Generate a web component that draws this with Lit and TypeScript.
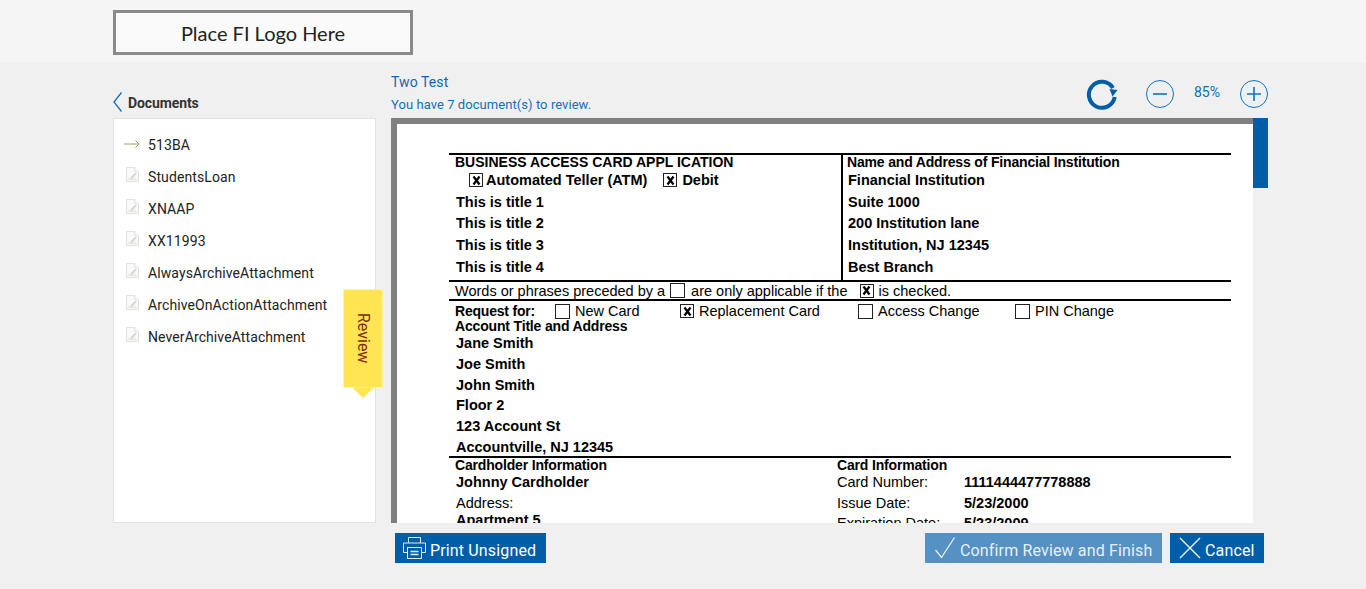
import { LitElement, html, css, svg } from "lit";
import { customElement } from "lit/decorators.js";

const docs = ["StudentsLoan", "XNAAP", "XX11993", "AlwaysArchiveAttachment", "ArchiveOnActionAttachment", "NeverArchiveAttachment"];
const titles = ["This is title 1", "This is title 2", "This is title 3", "This is title 4"];
const inst = ["Suite 1000", "200 Institution lane", "Institution, NJ 12345", "Best Branch"];
const addr = ["Jane Smith", "Joe Smith", "John Smith", "Floor 2", "123 Account St", "Accountville, NJ 12345"];

const fileIcon = svg`<svg class="file" width="13" height="15" viewBox="0 0 14 16" fill="none"><path d="M.5.500h9l4 4v11H.5z" fill="#fafafa" stroke="#dedede"/><path d="M9.500.500v4h4" stroke="#dedede" fill="#fff"/><path d="M2.500 13h9" stroke="#d6d6d6"/><path d="M5 11.500l5.500-5.500 1 1-5.500 5.500z" fill="#cdd8b6" stroke="#cacaca" stroke-width=".5"/></svg>`;
const box = (checked: boolean, cls = "") => html`<span class="box ${checked ? "on" : ""} ${cls}">${checked ? svg`<svg width="11" height="11" viewBox="0 0 11 11"><path d="M2.500 1.500l6 8M8.500 1.500l-6 8" stroke="#000" stroke-width="2.200"/></svg>` : ""}</span>`;

@customElement("app-root")
export class AppRoot extends LitElement {
  static styles = css`
    :host { display: block; width: 1366px; height: 589px; overflow: hidden; background: #f0f0f0; font-family: Roboto, sans-serif; }
    .top { height: 62px; box-sizing: border-box; padding: 10px 0 0 113px; background: #f5f5f5; }
    .logo { width: 300px; height: 45px; box-sizing: border-box; border: 3px solid #8a8a8a; background: #fafafa; display: flex; align-items: center; justify-content: center; font: 20px/1 Lato, sans-serif; color: #222; }
    .main { display: flex; padding-left: 113px; gap: 15px; }
    .side { width: 263px; position: relative; }
    .side-head { height: 56px; box-sizing: border-box; padding-top: 24px; display: flex; align-items: center; gap: 6px; font-size: 14px; font-weight: 700; color: #333; }
    .side-head span { position: relative; top: 1px; letter-spacing: -.1px; }
    .list { height: 405px; box-sizing: border-box; background: #fff; border: 1px solid #e2e2e2; padding: 10px 0 0 10px; }
    .item { height: 32px; display: flex; align-items: center; font-size: 14px; letter-spacing: .1px; color: #222; }
    .ic { width: 24px; display: flex; }
    .arrow { margin-top: -3px; }
    .file { margin-left: 1.500px; margin-top: -5px; }
    .tab { position: absolute; left: 230px; top: 227px; width: 40px; height: 99px; box-sizing: border-box; background: #ffe552; border: 1px solid #fff3a8; color: #822a12; font-size: 16px; writing-mode: vertical-rl; display: flex; align-items: center; justify-content: center; }
    .tab::after { content: ""; position: absolute; left: 9px; bottom: -11px; border: 10px solid transparent; border-bottom: 0; border-top: 10px solid #ffe552; }
    .view { width: 877px; }
    .view-head { height: 56px; position: relative; display: flex; justify-content: space-between; }
    .info { color: #1d62ab; }
    .name { font-size: 14px; line-height: 16px; margin-top: 12px; letter-spacing: .1px; }
    .count { font-size: 13px; line-height: 16px; margin-top: 7px; color: #0f70b7; letter-spacing: .06px; }
    .tools { display: flex; align-items: center; padding-top: 8px; height: 48px; color: #0f6cb0; font-size: 14px; }
    .refresh { margin-right: 28px; }
    .pct { width: 66px; text-align: center; position: relative; top: -2px; }
    .pane { height: 405px; display: flex; }
    .sheet { flex: 1; overflow: hidden; background: #fff; border-top: 6px solid #808080; border-left: 6px solid #808080; padding: 29px 22px 0 52px; font: 14.5px Arial, "Liberation Sans", sans-serif; color: #000; }
    .bar { width: 15px; }
    .thumb { height: 70px; background: #005ea8; }
    .b { font-weight: 700; }
    .ln { white-space: nowrap; display: flex; align-items: center; }
    .sec { display: grid; grid-template-columns: 392px 1fr; border-top: 2px solid #000; height: 125px; }
    .sec > div + div { border-left: 2px solid #000; padding-left: 4px; }
    .h { height: 14px; padding-left: 6px; line-height: 14px; font-size: 14px; letter-spacing: -.17px; }
    .title { letter-spacing: 0; }
    .auto { height: 22px; padding-left: 20px; }
    .auto .box { margin-right: 3px; }
    .auto .box.d { margin-left: 16px; margin-right: 5px; }
    .t { height: 21.67px; padding-left: 7px; }
    .rt.h { padding-left: 0; }
    .rt.auto, .rt.t { padding-left: 1px; }
    .rule { border-top: 2px solid #000; height: 17px; padding-left: 6px; }
    .rule .box { margin: 0 6px 0 5px; }
    .rule .box.c { margin: 0 5px 0 12px; }
    .req { display: grid; grid-template-columns: 100px 125px 178px 157px 1fr; height: 20px; border-top: 2px solid #000; padding-left: 6px; align-items: center; }
    .req .ln { gap: 5px; }
    .req .b { font-size: 14px; letter-spacing: -.2px; }
    .acct { height: 10px; padding-left: 6px; font-size: 14px; letter-spacing: -.17px; }
    .ad { height: 20.7px; padding-left: 7px; }
    .adlist { padding-top: 2px; height: 122px; }
    .card { display: grid; grid-template-columns: 388px 127px 1fr; border-top: 2px solid #000; margin-top: 1px; }
    .card .i { padding-left: 7px; }
    .card .x { padding-left: 0; }
    .c-row { height: 20.5px; }
    .c-row.short { height: 14px; }
    .box { width: 13px; height: 13px; border: 1px solid #222; display: inline-flex; align-items: center; justify-content: center; flex: none; }
    .box.on { border: 1.500px solid #222; width: 12px; height: 12px; }
    .foot { display: flex; justify-content: space-between; padding: 10px 4px 0; }
    .foot > div { display: flex; gap: 8px; }
    .btn { height: 30px; display: flex; align-items: center; background: #005ea8; color: #fff; font-size: 16px; letter-spacing: .15px; padding: 0 0 0 8px; gap: 4px; box-sizing: border-box; white-space: nowrap; }
    .btn svg { flex: none; }
    .btn span { position: relative; top: 2px; }
    .btn.print { width: 151px; }
    .btn.ok { width: 237px; background: #5591c3; color: #e8f0f7; padding-left: 10px; }
    .btn.no { width: 94px; padding-left: 9px; }
  `;

  render() {
    return html`
      <div class="top"><div class="logo">Place FI Logo Here</div></div>
      <div class="main">
        <div class="side">
          <div class="side-head">
            <svg width="9" height="20" viewBox="0 0 9 20" fill="none"><path d="M8.500 .5L1 10l7.500 9.500" stroke="#1272bd" stroke-width="1.300"/></svg>
            <span>Documents</span>
          </div>
          <div class="list">
            <div class="item"><span class="ic"><svg class="arrow" width="16" height="10" viewBox="0 0 16 10" fill="none"><path d="M0 5h15M11.500 1.500L15 5l-3.500 3.500" stroke="#8fa85f"/></svg></span>513BA</div>
            ${docs.map((d) => html`<div class="item"><span class="ic">${fileIcon}</span>${d}</div>`)}
          </div>
          <div class="tab">Review</div>
        </div>
        <div class="view">
          <div class="view-head">
            <div class="info">
              <div class="name">Two Test</div>
              <div class="count">You have 7 document(s) to review.</div>
            </div>
            <div class="tools">
              <svg class="refresh" width="32" height="32" viewBox="0 0 32 32" fill="none"><path d="M27 10A13 13 0 1 0 28.700 19" stroke="#005ea8" stroke-width="4"/><path d="M23.500 11L31.500 12 26.500 18.500z" fill="#005ea8"/></svg>
              <svg width="28" height="28" viewBox="0 0 28 28" fill="none"><circle cx="14" cy="14" r="13.500" stroke="#1272bd"/><path d="M7 14h14" stroke="#1272bd" stroke-width="1.600"/></svg>
              <span class="pct">85%</span>
              <svg width="28" height="28" viewBox="0 0 28 28" fill="none"><circle cx="14" cy="14" r="13.500" stroke="#1272bd"/><path d="M7 14h14M14 7v14" stroke="#1272bd" stroke-width="1.600"/></svg>
            </div>
          </div>
          <div class="pane">
            <div class="sheet">
              <div class="sec b">
                <div>
                  <div class="ln h title">BUSINESS ACCESS CARD APPL ICATION</div>
                  <div class="ln auto">${box(true)}Automated Teller (ATM)${box(true, "d")}Debit</div>
                  ${titles.map((t) => html`<div class="ln t">${t}</div>`)}
                </div>
                <div>
                  <div class="ln h rt">Name and Address of Financial Institution</div>
                  <div class="ln rt auto">Financial Institution</div>
                  ${inst.map((t) => html`<div class="ln t rt">${t}</div>`)}
                </div>
              </div>
              <div class="ln rule">Words or phrases preceded by a${box(false)}are only applicable if the${box(true, "c")}is checked.</div>
              <div class="req">
                <div class="ln b">Request for:</div>
                <div class="ln">${box(false)}New Card</div>
                <div class="ln">${box(true)}Replacement Card</div>
                <div class="ln">${box(false)}Access Change</div>
                <div class="ln">${box(false)}PIN Change</div>
              </div>
              <div class="ln b acct">Account Title and Address</div>
              <div class="b adlist">${addr.map((a) => html`<div class="ln ad">${a}</div>`)}</div>
              <div class="card">
                <div>
                  <div class="ln h b">Cardholder Information</div>
                  <div class="ln c-row b i">Johnny Cardholder</div>
                  <div class="ln c-row i">Address:</div>
                  <div class="ln c-row short b i">Apartment 5</div>
                </div>
                <div>
                  <div class="ln h b x">Card Information</div>
                  <div class="ln c-row">Card Number:</div>
                  <div class="ln c-row">Issue Date:</div>
                  <div class="ln c-row">Expiration Date:</div>
                </div>
                <div>
                  <div class="h"></div>
                  <div class="ln c-row b">1111444477778888</div>
                  <div class="ln c-row b">5/23/2000</div>
                  <div class="ln c-row b">5/23/2009</div>
                </div>
              </div>
            </div>
            <div class="bar"><div class="thumb"></div></div>
          </div>
          <div class="foot">
            <div>
              <div class="btn print">
                <svg width="23" height="22" viewBox="0 0 23 22" fill="none" stroke="#dfeaf4"><path d="M5.500 6V.5h12V6M4.500 15.500H.5V6h22v9.500h-4"/><rect x="4.500" y="10.500" width="14" height="11"/><path d="M7.500 14.500h8M7.500 17.500h8" stroke-width="1.500"/></svg>
                <span>Print Unsigned</span>
              </div>
            </div>
            <div>
              <div class="btn ok">
                <svg width="21" height="22" viewBox="0 0 21 22" fill="none"><path d="M.5 13l6 7.500L19.500 .5" stroke="#eaf1f7" stroke-width="1.300"/></svg>
                <span>Confirm Review and Finish</span>
              </div>
              <div class="btn no">
                <svg width="22" height="22" viewBox="0 0 22 22" fill="none"><path d="M1 1l20 20M21 1L1 21" stroke="#fff" stroke-width="1.300"/></svg>
                <span>Cancel</span>
              </div>
            </div>
          </div>
        </div>
      </div>
    `;
  }
}
